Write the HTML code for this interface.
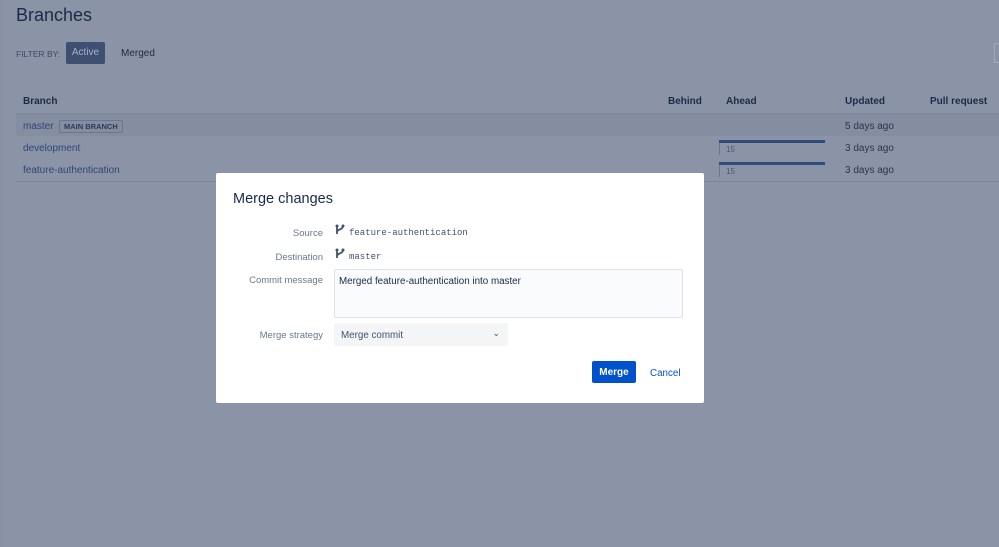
<!DOCTYPE html>
<html><head><meta charset="utf-8"><style>
*{box-sizing:border-box;margin:0;padding:0}
body{width:999px;height:547px;overflow:hidden;background:#8b94a6;font-family:"Liberation Sans",sans-serif;position:relative;color:#1d2a47}
.lb{position:absolute;left:0;top:0;width:3px;height:547px;background:#8892a4}
h1{position:absolute;left:16px;top:5px;font-weight:normal;font-size:18px;color:#1d2a47}
.f{position:absolute;left:16px;top:49px;font-size:8.5px;color:#3f4a62}
.act{position:absolute;left:66px;top:42px;width:39px;height:22px;background:#3e4f72;color:#a7b3cc;font-size:10px;border-radius:2px;text-align:center;line-height:22px}
.mg{position:absolute;left:121px;top:48px;font-size:10px;color:#1f2a44}
.th{position:absolute;top:96px;font-size:10px;font-weight:bold;color:#1d2a47}
.line{position:absolute;left:16px;right:0;height:1px;background:#7c859a}
.row{position:absolute;left:16px;right:0;height:22px}
.lk{position:absolute;left:23px;font-size:10px;color:#2d4677}
.dt{position:absolute;left:845px;font-size:10px;color:#2b344a}
.bar{position:absolute;left:719px;width:106px;height:3px;background:#2f4d7c}
.bn{position:absolute;left:719px;width:1px;height:12px;background:#6d778c}
.num{position:absolute;left:726px;font-size:8px;color:#4b5670}
.tag{position:absolute;left:59px;top:120px;border:1px solid #6b7590;font-size:7.5px;font-weight:bold;color:#2c3a5a;padding:1px 4px;border-radius:2px}
.dlg{position:absolute;left:216px;top:173px;width:488px;height:230px;background:#fff;border-radius:2px}
.dlg h2{position:absolute;left:17px;top:18px;font-weight:normal;font-size:14.5px;color:#172b4d}
.lbl{position:absolute;right:381px;font-size:9.5px;color:#6b778c;text-align:right;white-space:nowrap}
.mono{position:absolute;left:133px;font-family:"Liberation Mono",monospace;font-size:9px;color:#42526e}
.ic{position:absolute;left:119px}
.ta{position:absolute;left:118px;top:96px;width:349px;height:49px;border:1px solid #dfe1e6;background:#fafbfc;border-radius:2px;font-size:9.8px;color:#172b4d;padding:6px 4px}
.sel{position:absolute;left:118px;top:150px;width:174px;height:23px;background:#f4f5f7;border-radius:2px;font-size:9.8px;color:#42526e;padding:7px 7px}
.btn{position:absolute;left:376px;top:188px;width:44px;height:22px;background:#0052cc;color:#fff;font-weight:bold;font-size:10px;border-radius:2px;text-align:center;line-height:23px}
.cn{position:absolute;left:434px;top:195px;font-size:9.8px;color:#0052cc}
</style></head><body>
<div class="lb"></div>
<h1>Branches</h1>
<div class="f">FILTER BY:</div>
<div class="act">Active</div>
<div class="mg">Merged</div>
<div style="position:absolute;left:994px;top:43px;width:5px;height:20px;border:1px solid #a0a8b8;border-right:none"></div>
<div class="th" style="left:23px">Branch</div>
<div class="th" style="left:668px">Behind</div>
<div class="th" style="left:726px">Ahead</div>
<div class="th" style="left:845px">Updated</div>
<div class="th" style="left:930px">Pull request</div>
<div class="line" style="top:113px"></div>
<div class="row" style="top:114px;background:#858ea1"></div>
<div class="lk" style="top:121px">master</div><div class="tag">MAIN BRANCH</div>
<div class="dt" style="top:121px">5 days ago</div>
<div class="lk" style="top:143px">development</div>
<div class="bar" style="top:140px"></div><div class="bn" style="top:143px"></div><div class="num" style="top:145px">15</div>
<div class="dt" style="top:143px">3 days ago</div>
<div class="lk" style="top:165px">feature-authentication</div>
<div class="bar" style="top:162px"></div><div class="bn" style="top:165px"></div><div class="num" style="top:167px">15</div>
<div class="dt" style="top:165px">3 days ago</div>
<div class="line" style="top:181px"></div>
<div class="dlg">
<h2>Merge changes</h2>
<div class="lbl" style="top:55px">Source</div>
<svg class="ic" style="top:51px" width="10" height="11" viewBox="0 0 10 11"><path d="M2 1v9M2 8c0-3 6-2 6-6" stroke="#42526e" stroke-width="1.8" fill="none"/><circle cx="2" cy="2" r="1.5" fill="#42526e"/><circle cx="8" cy="2" r="1.5" fill="#42526e"/></svg>
<div class="mono" style="top:55px">feature-authentication</div>
<div class="lbl" style="top:79px">Destination</div>
<svg class="ic" style="top:75px" width="10" height="11" viewBox="0 0 10 11"><path d="M2 1v9M2 8c0-3 6-2 6-6" stroke="#42526e" stroke-width="1.8" fill="none"/><circle cx="2" cy="2" r="1.5" fill="#42526e"/><circle cx="8" cy="2" r="1.5" fill="#42526e"/></svg>
<div class="mono" style="top:79px">master</div>
<div class="lbl" style="top:102px">Commit message</div>
<div class="ta">Merged feature-authentication into master</div>
<div class="lbl" style="top:157px">Merge strategy</div>
<div class="sel">Merge commit<span style="position:absolute;right:8px;top:5px;font-size:9px">&#8964;</span></div>
<div class="btn">Merge</div>
<div class="cn">Cancel</div>
</div>
</body></html>
